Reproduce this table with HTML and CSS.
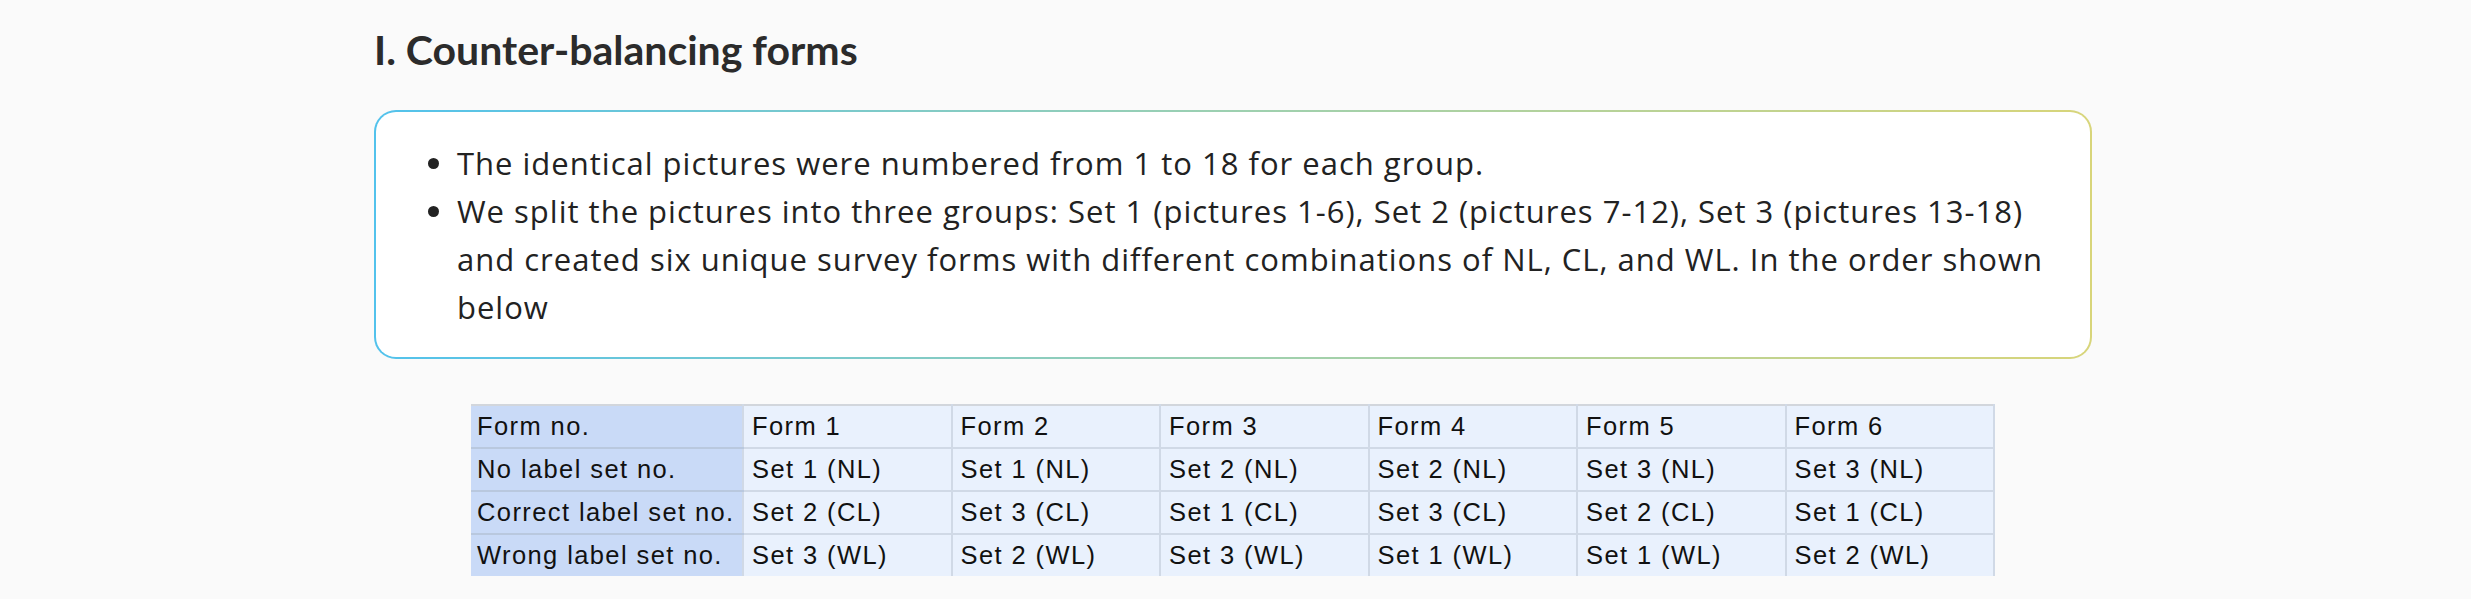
FILE: index.html
```html
<!DOCTYPE html>
<html lang="en">
<head>
<meta charset="utf-8">
<title>Counter-balancing forms</title>
<link rel="stylesheet" href="styles.css">
</head>
<body>
<main class="page">
  <h2 class="title">I. Counter-balancing forms</h2>
  <div class="note">
    <ul class="note-list">
      <li>The identical pictures were numbered from 1 to 18 for each group.</li>
      <li>We split the pictures into three groups: Set 1 (pictures 1-6), Set 2 (pictures 7-12), Set 3 (pictures 13-18) and created six unique survey forms with different combinations of NL, CL, and WL. In the order shown below</li>
    </ul>
  </div>
  <table class="forms">
    <colgroup>
      <col class="col-head">
      <col span="6" class="col-form">
    </colgroup>
    <tbody>
      <tr><th>Form no.</th><td>Form 1</td><td>Form 2</td><td>Form 3</td><td>Form 4</td><td>Form 5</td><td>Form 6</td></tr>
      <tr><th>No label set no.</th><td>Set 1 (NL)</td><td>Set 1 (NL)</td><td>Set 2 (NL)</td><td>Set 2 (NL)</td><td>Set 3 (NL)</td><td>Set 3 (NL)</td></tr>
      <tr><th>Correct label set no.</th><td>Set 2 (CL)</td><td>Set 3 (CL)</td><td>Set 1 (CL)</td><td>Set 3 (CL)</td><td>Set 2 (CL)</td><td>Set 1 (CL)</td></tr>
      <tr><th>Wrong label set no.</th><td>Set 3 (WL)</td><td>Set 2 (WL)</td><td>Set 3 (WL)</td><td>Set 1 (WL)</td><td>Set 1 (WL)</td><td>Set 2 (WL)</td></tr>
    </tbody>
  </table>
</main>
</body>
</html>
```
FILE: styles.css
```css
html, body {
  margin: 0;
  padding: 0;
  background: #fafafa;
}
body {
  font-family: "Open Sans", "Noto Sans", sans-serif;
  color: #222;
}
.page {
  width: 1718px;
  margin: 0 auto;
  padding: 26px 5px 0 0;
}
.title {
  margin: 0;
  font-family: Lato, "Open Sans", sans-serif;
  font-size: 41px;
  line-height: 48px;
  font-weight: 700;
  color: #2b2b2b;
}
.note {
  margin-top: 36px;
  border: 2px solid transparent;
  border-radius: 22px;
  background:
    linear-gradient(#ffffff, #ffffff) padding-box,
    linear-gradient(90deg, #52c2ec 0%, #9dd0b0 50%, #d8d57a 100%) border-box;
  padding: 27px 28px 26px 38px;
}
.note-list {
  margin: 0;
  padding-left: 43px;
  font-size: 31px;
  line-height: 48px;
  letter-spacing: 1px;
  color: #222;
}
.forms {
  width: 1524px;
  margin: 45px auto 0;
  border-collapse: collapse;
  table-layout: fixed;
  font-family: "Liberation Sans", Arial, sans-serif;
  font-size: 25.5px;
  letter-spacing: 1.4px;
  color: #111;
  border-top: 2px solid #d2d6dc;
}
.col-head {
  width: 272px;
}
.forms th,
.forms td {
  height: 41px;
  padding: 0 6px;
  text-align: left;
  font-weight: 400;
  white-space: nowrap;
  border: 2px solid #d0d9e6;
  border-top: none;
}
.forms th {
  background: #c9daf7;
  border-left: none;
  border-bottom-color: #b9c8de;
}
.forms td {
  padding-left: 8px;
  background: #e9f1fd;
}
.forms tr:last-child th,
.forms tr:last-child td {
  border-bottom: none;
}
```
